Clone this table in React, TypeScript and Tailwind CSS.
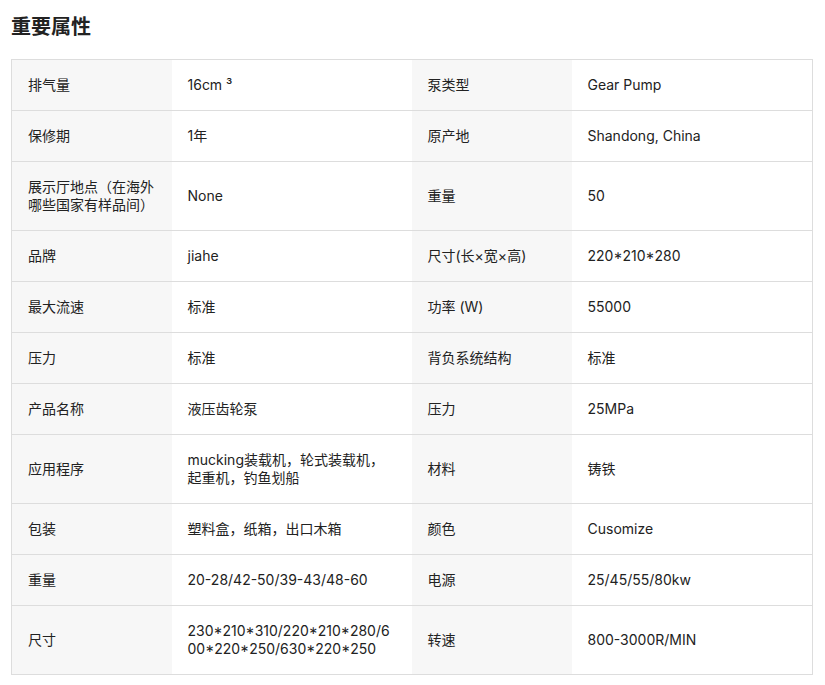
import React from 'react';

const rows: [string, string, string, string][] = [
  ['排气量', '16cm ³', '泵类型', 'Gear Pump'],
  ['保修期', '1年', '原产地', 'Shandong, China'],
  ['展示厅地点（在海外哪些国家有样品间）', 'None', '重量', '50'],
  ['品牌', 'jiahe', '尺寸(长×宽×高)', '220*210*280'],
  ['最大流速', '标准', '功率 (W)', '55000'],
  ['压力', '标准', '背负系统结构', '标准'],
  ['产品名称', '液压齿轮泵', '压力', '25MPa'],
  ['应用程序', 'mucking装载机，轮式装载机，起重机，钓鱼划船', '材料', '铸铁'],
  ['包装', '塑料盒，纸箱，出口木箱', '颜色', 'Cusomize'],
  ['重量', '20-28/42-50/39-43/48-60', '电源', '25/45/55/80kw'],
  ['尺寸', '230*210*310/220*210*280/600*220*250/630*220*250', '转速', '800-3000R/MIN'],
];

export default function App() {
  return (
    <div className="min-h-screen bg-white pt-[13px] pl-[11px] text-[#222] [font-family:Inter,'Noto_Sans_CJK_SC',sans-serif]">
      <h2 className="text-[20px] font-bold leading-[28px] text-[#222]">重要属性</h2>
      <table className="mt-[18px] w-[801px] table-fixed border-collapse border border-[#dddddd] text-[14px] leading-[18px]">
        <colgroup>
          <col className="w-[160px]" />
          <col className="w-[240px]" />
          <col className="w-[160px]" />
          <col className="w-[241px]" />
        </colgroup>
        <tbody>
          {rows.map(([k1, v1, k2, v2], i) => (
            <tr key={i} className="border-b border-[#dddddd]">
              <td className="bg-[#f7f7f7] px-4 py-4 align-middle break-all">{k1}</td>
              <td className="px-4 py-4 align-middle break-all">{v1}</td>
              <td className="bg-[#f7f7f7] px-4 py-4 align-middle break-all">{k2}</td>
              <td className="px-4 py-4 align-middle break-all">{v2}</td>
            </tr>
          ))}
        </tbody>
      </table>
    </div>
  );
}
